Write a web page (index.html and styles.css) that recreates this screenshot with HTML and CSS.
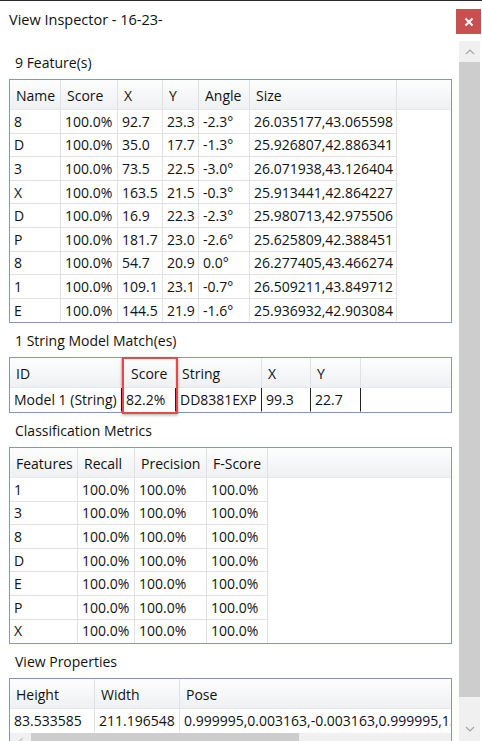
FILE: index.html
```html
<!DOCTYPE html>
<html lang="en">
<head>
    <meta charset="UTF-8">
    <meta name="viewport" content="width=device-width, initial-scale=1.0">
    <title>View Inspector</title>
    <link rel="stylesheet" href="styles.css">
</head>
<body>

    <div class="window">
        <header class="titlebar">
            <h1>View Inspector - 16-23-</h1>
            <button class="close-button" aria-label="Close">
                <svg width="10" height="10" viewBox="0 0 10 10"><path d="M1.5 1.5 L8.5 8.5 M8.5 1.5 L1.5 8.5" stroke="#fff" stroke-width="2"/></svg>
            </button>
        </header>

        <div class="main">
            <div class="content">

                <div class="section-label">9 Feature(s)</div>
                <div class="grid-wrap">
                    <table class="grid">
                        <colgroup>
                            <col style="width:51px"><col style="width:57px"><col style="width:45px">
                            <col style="width:36px"><col style="width:51px"><col style="width:147px"><col>
                        </colgroup>
                        <thead>
                            <tr><th>Name</th><th>Score</th><th>X</th><th>Y</th><th>Angle</th><th>Size</th><th class="filler"></th></tr>
                        </thead>
                        <tbody>
                            <tr><td>8</td><td>100.0%</td><td>92.7</td><td>23.3</td><td>-2.3°</td><td>26.035177,43.065598</td><td class="filler"></td></tr>
                            <tr><td>D</td><td>100.0%</td><td>35.0</td><td>17.7</td><td>-1.3°</td><td>25.926807,42.886341</td><td class="filler"></td></tr>
                            <tr><td>3</td><td>100.0%</td><td>73.5</td><td>22.5</td><td>-3.0°</td><td>26.071938,43.126404</td><td class="filler"></td></tr>
                            <tr><td>X</td><td>100.0%</td><td>163.5</td><td>21.5</td><td>-0.3°</td><td>25.913441,42.864227</td><td class="filler"></td></tr>
                            <tr><td>D</td><td>100.0%</td><td>16.9</td><td>22.3</td><td>-2.3°</td><td>25.980713,42.975506</td><td class="filler"></td></tr>
                            <tr><td>P</td><td>100.0%</td><td>181.7</td><td>23.0</td><td>-2.6°</td><td>25.625809,42.388451</td><td class="filler"></td></tr>
                            <tr><td>8</td><td>100.0%</td><td>54.7</td><td>20.9</td><td>0.0°</td><td>26.277405,43.466274</td><td class="filler"></td></tr>
                            <tr><td>1</td><td>100.0%</td><td>109.1</td><td>23.1</td><td>-0.7°</td><td>26.509211,43.849712</td><td class="filler"></td></tr>
                            <tr><td>E</td><td>100.0%</td><td>144.5</td><td>21.9</td><td>-1.6°</td><td>25.936932,42.903084</td><td class="filler"></td></tr>
                        </tbody>
                    </table>
                </div>

                <div class="section-label">1 String Model Match(es)</div>
                <div class="grid-holder">
                    <div class="grid-wrap matches">
                        <table class="grid">
                            <colgroup>
                                <col style="width:112px"><col style="width:54px"><col style="width:86px">
                                <col style="width:49px"><col style="width:50px"><col>
                            </colgroup>
                            <thead>
                                <tr><th>ID</th><th class="score-head">Score</th><th>String</th><th>X</th><th>Y</th><th class="filler"></th></tr>
                            </thead>
                            <tbody>
                                <tr class="dark-row"><td>Model 1 (String)</td><td>82.2%</td><td>DD8381EXP</td><td>99.3</td><td>22.7</td><td class="filler"></td></tr>
                            </tbody>
                        </table>
                    </div>
                    <div class="highlight"></div>
                </div>

                <div class="section-label">Classification Metrics</div>
                <div class="grid-wrap">
                    <table class="grid">
                        <colgroup>
                            <col style="width:68px"><col style="width:57px"><col style="width:72px">
                            <col style="width:61px"><col>
                        </colgroup>
                        <thead>
                            <tr><th>Features</th><th>Recall</th><th>Precision</th><th>F-Score</th><th class="filler"></th></tr>
                        </thead>
                        <tbody>
                            <tr><td>1</td><td>100.0%</td><td>100.0%</td><td>100.0%</td><td class="filler"></td></tr>
                            <tr><td>3</td><td>100.0%</td><td>100.0%</td><td>100.0%</td><td class="filler"></td></tr>
                            <tr><td>8</td><td>100.0%</td><td>100.0%</td><td>100.0%</td><td class="filler"></td></tr>
                            <tr><td>D</td><td>100.0%</td><td>100.0%</td><td>100.0%</td><td class="filler"></td></tr>
                            <tr><td>E</td><td>100.0%</td><td>100.0%</td><td>100.0%</td><td class="filler"></td></tr>
                            <tr><td>P</td><td>100.0%</td><td>100.0%</td><td>100.0%</td><td class="filler"></td></tr>
                            <tr><td>X</td><td>100.0%</td><td>100.0%</td><td>100.0%</td><td class="filler"></td></tr>
                        </tbody>
                    </table>
                </div>

                <div class="section-label">View Properties</div>
                <div class="grid-wrap">
                    <table class="grid wide">
                        <colgroup>
                            <col style="width:85px"><col style="width:85px"><col style="width:420px">
                        </colgroup>
                        <thead>
                            <tr><th>Height</th><th>Width</th><th>Pose</th></tr>
                        </thead>
                        <tbody>
                            <tr><td>83.533585</td><td>211.196548</td><td>0.999995,0.003163,-0.003163,0.999995,1.000000,0.000000</td></tr>
                        </tbody>
                    </table>
                    <div class="hscroll">
                        <div class="hscroll-arrow">
                            <svg width="8" height="8" viewBox="0 0 8 8"><polyline points="5.5,1 2.5,4 5.5,7" fill="none" stroke="#a6a6a6" stroke-width="1"/></svg>
                        </div>
                        <div class="hscroll-thumb"></div>
                    </div>
                </div>

            </div>

            <div class="vscroll">
                <div class="vscroll-button">
                    <svg width="10" height="8" viewBox="0 0 10 8"><polyline points="1,6 5,2 9,6" fill="none" stroke="#a6a6a6" stroke-width="1.2"/></svg>
                </div>
                <div class="vscroll-thumb"></div>
                <div class="vscroll-track"></div>
                <div class="vscroll-button">
                    <svg width="10" height="8" viewBox="0 0 10 8"><polyline points="1,2 5,6 9,2" fill="none" stroke="#a6a6a6" stroke-width="1.2"/></svg>
                </div>
            </div>
        </div>
    </div>

</body>
</html>
```

FILE: styles.css
```css
body {
    font-family: "Open Sans", "Noto Sans", sans-serif;
    font-size: 14px;
    color: #111;
    background-color: #fff;
    margin: 0;
    padding: 0;
    overflow: hidden;
}
.window {
    height: 741px;
    border-top: 1px solid #2a2a2a;
    box-sizing: border-box;
    display: flex;
    flex-direction: column;
    overflow: hidden;
}
.titlebar {
    height: 40px;
    display: flex;
    align-items: flex-start;
    justify-content: space-between;
    padding: 0 1px 0 9px;
    flex-shrink: 0;
}
.titlebar h1 {
    margin: 0;
    margin-top: 9px;
    font-size: 14.5px;
    font-weight: normal;
    line-height: 20px;
}
.close-button {
    width: 25px;
    height: 25px;
    margin-top: 8px;
    border: none;
    padding: 0;
    background-color: #c75050;
    display: flex;
    align-items: center;
    justify-content: center;
}
.main {
    flex: 1;
    display: flex;
    min-height: 0;
}
.content {
    flex: 1;
    padding: 4px 7px 0 9px;
    overflow: hidden;
}
.section-label {
    height: 34px;
    box-sizing: border-box;
    padding: 8px 0 0 6px;
    line-height: 20px;
}
/* data grids */
.grid-holder {
    position: relative;
}
.grid-wrap {
    position: relative;
    border: 1px solid #8397b6;
    overflow: hidden;
}
.grid {
    width: 100%;
    table-layout: fixed;
    border-collapse: separate;
    border-spacing: 0;
}
.grid.wide {
    width: 590px;
}
.grid th {
    height: 30px;
    box-sizing: border-box;
    padding: 2px 0 0 6px;
    text-align: left;
    font-weight: normal;
    white-space: nowrap;
    background: linear-gradient(#fdfdfd, #f6f7f8 50%, #eef0f2);
    border-right: 1px solid #dfe1e4;
    border-bottom: 1px solid #e6e7e9;
}
.grid td {
    height: 23.6px;
    box-sizing: border-box;
    padding: 0 0 0 4px;
    white-space: nowrap;
    overflow: hidden;
    border-right: 1px solid #e1e1e1;
    border-bottom: 1px solid #e1e1e1;
}
.grid tbody tr:last-child td {
    border-bottom-color: transparent;
}
.grid th.filler {
    border-right: none;
}
.grid td.filler {
    border: none;
}
.matches .dark-row td {
    border-right-color: #222;
    border-bottom-color: #222;
}
.matches .dark-row td.filler {
    border: none;
}
.score-head {
    padding-left: 9px !important;
}
.highlight {
    position: absolute;
    left: 113px;
    top: 0;
    width: 52px;
    height: 53px;
    border: 2px solid #e8474b;
    box-shadow: 0 1px 3px rgba(0, 0, 0, 0.35);
}
/* scrollbars */
.hscroll {
    height: 17px;
    display: flex;
    background-color: #f0f0f0;
}
.hscroll-arrow {
    width: 21px;
    display: flex;
    align-items: center;
    justify-content: center;
}
.hscroll-thumb {
    width: 268px;
    background-color: #cdcdcd;
}
.vscroll {
    width: 21px;
    margin-right: 2px;
    display: flex;
    flex-direction: column;
    background-color: #f0f0f0;
}
.vscroll-button {
    height: 21px;
    display: flex;
    align-items: center;
    justify-content: center;
    flex-shrink: 0;
}
.vscroll-thumb {
    height: 635px;
    background-color: #cdcdcd;
    flex-shrink: 0;
}
.vscroll-track {
    height: 21px;
    flex-shrink: 0;
}
```
